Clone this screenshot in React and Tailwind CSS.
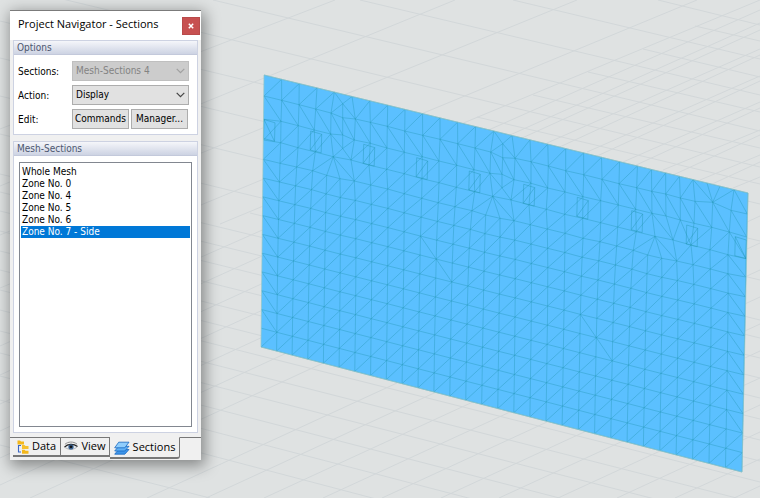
import { useState } from 'react';

const zones = ['Whole Mesh', 'Zone No. 0', 'Zone No. 4', 'Zone No. 5', 'Zone No. 6', 'Zone No. 7 - Side'];

// Ground grid, each entry is x1 y1 x2 y2
const groundLines = [
  [658, 0, 760, 25], [513, 0, 760, 59], [360, 0, 760, 95], [213, 0, 760, 131], [0, -16, 760, 167],
  [0, 21, 760, 204], [0, 58, 760, 241], [0, 96, 760, 280], [0, 134, 760, 320],
  [695, 26, 760, 41], [643, 49, 760, 77], [588, 72, 760, 112], [533, 95, 760, 148], [477, 117, 760, 184],
  [250, 213, 760, 338], [0, 174, 760, 358], [0, 192, 760, 378], [0, 211, 760, 398], [0, 231, 760, 419],
  [0, 251, 760, 440], [0, 270, 760, 461], [0, 290, 760, 482], [0, 310, 760, 504], [0, 331, 760, 526],
  [0, 353, 760, 550], [0, 376, 760, 574], [0, 400, 760, 600], [0, 445, 210, 498],
  [0, 129, 335, 0], [0, 186, 455, 0], [0, 235, 577, 0], [0, 288, 697, 0], [220, 224, 760, 0],
  [510, 135, 760, 23], [547, 143, 760, 49], [587, 152, 760, 76], [623, 162, 760, 102], [663, 170, 760, 130],
  [700, 180, 760, 155], [733, 188, 760, 177],
  [0, 346, 760, 10], [0, 375, 760, 30], [0, 404, 760, 55], [0, 431, 760, 81], [0, 458, 760, 108],
  [0, 485, 760, 135], [30, 498, 760, 162], [147, 498, 760, 216], [206, 498, 760, 243],
  [264, 498, 760, 270], [323, 498, 760, 297], [382, 498, 760, 324], [441, 498, 760, 351],
  [499, 498, 760, 378], [558, 498, 760, 405], [617, 498, 760, 432], [675, 498, 760, 459], [734, 498, 760, 486],
];

const topX = [
  264, 281.6, 299.2, 317, 334.3, 352, 369.8, 387.7, 405, 422.5, 440, 457.6, 475.5, 493.8, 512, 530, 547.8,
  565.7, 583.6, 601.5, 619.5, 637.4, 651.5, 665.7, 679.5, 693, 707, 720, 734, 748,
];

// Upper mesh rows, where the nodes bend around the openings
const row0 = topX.map((x) => [x, 75 + (x - 264) * 0.2438]);
const row1 = [
  [264, 96], [281.7, 100.3], [299, 104.7], [315.7, 109], [331, 113], [342.7, 117.7], [355.3, 119], [370.3, 122.3],
  [387.3, 126.3], [404.7, 131], [422.7, 135.3], [440, 139.3], [457.7, 143.7], [475, 148], [490.7, 152],
  [502.7, 157.7], [515, 158.3], [531, 161.7], [548.3, 166], [565.7, 170.7], [583.7, 174.7], [602, 179.3],
  [619, 183.7], [636.7, 187.7], [651.7, 191.3], [665.7, 194], [680.3, 198], [695, 201.3], [712.7, 202.3],
  [731, 210.3], [747.3, 214],
];
const row2 = [
  [264, 119.3], [281, 121.3], [298.3, 125.7], [314.3, 130], [330.7, 134], [342.7, 135], [354.3, 140], [370.3, 143.3],
  [387, 148], [404.3, 152.3], [422.3, 156.7], [439, 161], [456.7, 165.3], [474, 169.7], [490, 173.3],
  [502, 174.3], [514, 179.7], [531, 183.3], [547.7, 188], [565, 192], [583, 196.7], [600.7, 200.7],
  [618.3, 205], [635.7, 209.3], [652, 213.3], [666, 216], [680.3, 220], [694, 223.3], [711.7, 227.3],
  [729.3, 232], [746.7, 237],
];
const row3 = [
  [263.5, 140], [280.7, 142.7], [298, 147.7], [315.3, 152], [333.3, 156.7], [351, 160], [369, 165], [386.7, 169.3],
  [404.3, 173.7], [422, 178.7], [439, 182.7], [456.3, 187.3], [474.7, 191.7], [492.7, 196.3], [511, 200],
  [529, 204.7], [546.3, 209.3], [564.7, 214.3], [582.7, 218.3], [600.7, 222.7], [617.7, 227], [636.3, 231.7],
  [655, 236.3], [673, 240], [691, 245], [710, 249.7], [728, 254.7], [746, 258.7],
];
const row4 = [
  [263.3, 159.3], [280, 163.3], [296.7, 167], [312.7, 170.7], [326.7, 175.3], [340, 178.7], [354.3, 181],
  [370.7, 185], [387.7, 189], [404.3, 193.7], [421.7, 198.3], [438.3, 202.7], [455, 206.7], [472, 210.7],
  [485.7, 215], [500, 218.3], [514, 220.7], [530.3, 224.7], [547.3, 229], [565, 233.3], [583, 238.3],
  [600, 241.7], [616.7, 246], [633.3, 250.3], [647.7, 255], [661.7, 258.3], [676.7, 261], [693, 264.7],
  [710.3, 269], [728, 273.7], [745.7, 277],
];

// Below row 4 the mesh settles into 10 even rows of 30 columns
const lowerRow = (k) =>
  row4.map(([x, y], i) => {
    const u = i / 30;
    const t = k / 10;
    const startX = 263.3 + 467 * u + 15.4 * u * u;
    const startY = 159.3 + (startX - 263.3) * 0.2455;
    const endX = 261 + 466 * u + 15 * u * u;
    const endY = 347 + (endX - 261) * 0.2599;
    const fade = Math.pow(0.7, k) * (1 - t);
    return [startX + (endX - startX) * t + (x - startX) * fade, startY + (endY - startY) * t + (y - startY) * fade];
  });

const rows = [row0, row1, row2, row3, row4];
for (let k = 1; k <= 10; k++) rows.push(lowerRow(k));

// How each strip is cut into triangles: T steps along the upper row, B along the lower.
// H and h put an extra node in the middle of the cell.
const strips = [
  'TB'.repeat(4) + 'HT' + 'BT'.repeat(7) + 'BHT' + 'BT'.repeat(10) + 'BBTTTBBT',
  'BT'.repeat(30),
  'TB'.repeat(4) + 'hT' + 'BT'.repeat(7) + 'BhT' + 'BT'.repeat(7) + 'BBTTBTTBTBBT',
  'TB'.repeat(3) + 'TBBBTT' + 'BT'.repeat(7) + 'BBBTT' + 'BT'.repeat(7) + 'BBBTT' + 'BTBTBBT',
];
const flipped = { 6: 10, 7: 11, 8: 20, 9: 21 };
for (let r = 4; r < 14; r++) {
  let s = r === 13 ? 'TB' : 'BT';
  for (let c = 1; c < 29; c++) s += flipped[r] === c ? 'BT' : 'TB';
  strips.push(s + (r >= 12 ? 'TB' : 'BT'));
}

const seg = (a, b) => `M${a[0].toFixed(1)} ${a[1].toFixed(1)}L${b[0].toFixed(1)} ${b[1].toFixed(1)}`;

const buildMesh = () => {
  let d = '';
  rows.forEach((row) => {
    for (let i = 1; i < row.length; i++) d += seg(row[i - 1], row[i]);
  });
  strips.forEach((steps, r) => {
    const top = rows[r];
    const bottom = rows[r + 1];
    let i = 0;
    let j = 0;
    for (const step of steps) {
      if (step === 'H') {
        const hub = [bottom[j + 1][0], bottom[j + 1][1] - 14];
        [top[i], top[i + 1], bottom[j], bottom[j + 1], bottom[j + 2]].forEach((p) => { d += seg(hub, p); });
        i += 1;
        j += 2;
      } else if (step === 'h') {
        const hub = [top[i + 1][0], top[i + 1][1] + 13.5];
        [top[i], top[i + 1], top[i + 2], bottom[j], bottom[j + 1]].forEach((p) => { d += seg(hub, p); });
        i += 2;
        j += 1;
      } else if (step === 'T') {
        i += 1;
      } else {
        j += 1;
      }
      if (top[i] && bottom[j]) d += seg(top[i], bottom[j]);
    }
  });
  return d;
};

const meshPath = buildMesh();

const openings = [
  [264, 119.5], [310.7, 131], [363.7, 144.3], [416.7, 157.7], [469.3, 171], [523.7, 184.3], [577.3, 197.3],
  [631.7, 210.7], [686.7, 225], [735.3, 236.7],
];

const Viewport = () => (
  <svg className="absolute inset-0 h-full w-full" viewBox="0 0 760 498" preserveAspectRatio="xMinYMin slice" aria-hidden="true">
    <g stroke="#d2d7d9" strokeWidth="1">
      {groundLines.map(([x1, y1, x2, y2], i) => (
        <line key={i} x1={x1} y1={y1} x2={x2} y2={y2} />
      ))}
    </g>
    <polygon points="264,75 748,193 742,472 261,347" fill="#5bc0ff" />
    <path d={meshPath} stroke="#1f94b0" strokeOpacity="0.36" strokeWidth="1" fill="none" />
    <g stroke="#1f94b0" strokeOpacity="0.5" strokeWidth="0.8" fill="none">
      {openings.map(([x, y], i) => {
        const edge = i === 0 || i === openings.length - 1;
        return (
          <path
            key={i}
            d={`M${x} ${y}l11 3.3l-.5 18.5l-11 -2.8z${edge ? 'l10.5 21.8' : 'm11 3.3l-11.5 15.7'}`}
          />
        );
      })}
    </g>
    <path d="M264 75L748 193L742 472L261 347z" stroke="#8fc6c9" strokeWidth="0.7" fill="none" />
  </svg>
);

const Chevron = ({ className }) => (
  <svg className={className} width="9" height="6" viewBox="0 0 9 6" fill="none" stroke="currentColor" strokeWidth="1.2" aria-hidden="true">
    <path d="M.7 .8L4.5 4.6L8.3 .8" />
  </svg>
);

const DataIcon = () => (
  <svg width="12" height="14" viewBox="0 0 12 14" aria-hidden="true">
    <path d="M4 5.500H1.500V12H4" stroke="#3b66c4" fill="none" strokeWidth="1.1" />
    <path d="M.5 .5h2.500l1 1h3V4.500H.5z" fill="#f3b71b" />
    <path d="M5 5h2.500l1 1h3V9H5z" fill="#f6c02d" />
    <path d="M5 9.800h2.500l1 1h3v3H5z" fill="#f3b71b" />
  </svg>
);

const EyeIcon = () => (
  <svg width="14" height="11" viewBox="0 0 15 11" aria-hidden="true">
    <path d="M1 3.200C4 .2 10 -.3 14 3" stroke="#888" strokeWidth="1" fill="none" />
    <path d="M.5 6.200C4 2.500 10 2.200 14.500 5.500C11 9.200 5.500 9.800 .5 6.200z" fill="#e4eaf0" />
    <path d="M.5 6.200C4 2.500 10 2.200 14.500 5.500" stroke="#222" strokeWidth="1.3" fill="none" />
    <path d="M.5 6.200C5.500 9.800 11 9.200 14.500 5.500" stroke="#999" strokeWidth="0.7" fill="none" />
    <circle cx="7.500" cy="6" r="2.800" fill="#3b6496" />
    <circle cx="7.500" cy="5.800" r="1.500" fill="#111" />
  </svg>
);

const SectionsIcon = () => (
  <svg width="16" height="14" viewBox="0 0 16 14" stroke="#1767c0" strokeWidth="0.8" strokeLinejoin="round" aria-hidden="true">
    <path d="M.7 13.200L4.700 8.500H15L10.800 13.200z" fill="#3d95ea" />
    <path d="M.7 10L4.700 5.300H15L10.800 10z" fill="#5fb0f5" />
    <path d="M.7 6.800L4.700 1.200H15L10.800 6.800z" fill="#8fcdfc" />
  </svg>
);

const Group = ({ title, className = '', children }) => (
  <section className={`border border-[#cdd2e2] bg-white ${className}`}>
    <h2 className="h-[14px] border-b border-[#c3c9db] bg-gradient-to-b from-[#f5f6fa] to-[#cdd3e3] pl-[3px] text-[10px] leading-[14px] text-[#4d5770]">
      {title}
    </h2>
    {children}
  </section>
);

const selectClass = 'h-5 w-full appearance-none rounded-none border px-[3px] text-[10px] leading-4 outline-none';
const buttonClass = 'h-5 w-[57px] border border-[#adadad] bg-[#e1e1e1] text-center text-[10px] leading-4 whitespace-nowrap';

const App = () => {
  const [selected, setSelected] = useState('Zone No. 7 - Side');
  const [action, setAction] = useState('Display');
  const [tab, setTab] = useState('Sections');

  return (
    <main className='relative min-h-screen overflow-hidden bg-[#dfe2e2] p-[10px] font-["DejaVu_Sans_Condensed","DejaVu_Sans",sans-serif] text-black'>
      <Viewport />
      <aside className="relative w-[191px] border-t border-[#7b7b7b] bg-[#f0f0f0] shadow-[2px_4px_14px_2px_rgba(0,0,0,0.4)]">
        <header className="flex h-[29px] items-center justify-between bg-white pr-px pl-2">
          <h1 className='pb-1 font-["Open_Sans",sans-serif] text-[11px] leading-4 whitespace-nowrap'>Project Navigator - Sections</h1>
          <button
            type="button"
            aria-label="Close"
            className="flex h-[18px] w-[18px] items-center justify-center border border-[#b94a4a] bg-[#c75050] text-white"
          >
            <svg width="6" height="6" viewBox="0 0 6 6" stroke="currentColor" strokeWidth="1.500" aria-hidden="true">
              <path d="M.8 .8L5.200 5.200M5.200 .8L.8 5.200" />
            </svg>
          </button>
        </header>

        <div className="px-[3px]">
          <Group title="Options">
            <div className="grid grid-cols-[54px_1fr] items-center gap-y-1 pt-[6px] pr-2 pb-[5px] pl-1 text-[10px]">
              <label htmlFor="sections">Sections:</label>
              <div className="relative flex">
                <select id="sections" disabled className={`${selectClass} border-[#bfbfbf] bg-[#cccccc] text-[#838383] opacity-100`}>
                  <option>Mesh-Sections 4</option>
                </select>
                <Chevron className="pointer-events-none absolute top-[7px] right-1 text-[#a0a0a0]" />
              </div>
              <label htmlFor="action">Action:</label>
              <div className="relative flex">
                <select
                  id="action"
                  value={action}
                  onChange={(e) => setAction(e.target.value)}
                  className={`${selectClass} border-[#adadad] bg-[#e1e1e1]`}
                >
                  <option>Display</option>
                </select>
                <Chevron className="pointer-events-none absolute top-[7px] right-1 text-[#444]" />
              </div>
              <span>Edit:</span>
              <div className="flex gap-[2px]">
                <button type="button" className={buttonClass}>Commands</button>
                <button type="button" className={buttonClass}>Manager...</button>
              </div>
            </div>
          </Group>

          <Group title="Mesh-Sections" className="mt-[6px]">
            <div className="px-[5px] pt-[6px] pb-[5px]">
              <ul className="h-[265px] border border-[#828790] bg-white px-px py-[3px]">
                {zones.map((zone) => (
                  <li key={zone}>
                    <button
                      type="button"
                      aria-pressed={zone === selected}
                      onClick={() => setSelected(zone)}
                      className={`block w-full pl-px text-left text-[10px] leading-[12px] ${zone === selected ? 'bg-[#0078d7] text-white' : ''}`}
                    >
                      {zone}
                    </button>
                  </li>
                ))}
              </ul>
            </div>
          </Group>
        </div>

        <nav className='mt-1 flex h-[23px] items-start font-["Open_Sans",sans-serif] text-[11px]'>
          <span className="h-px w-[3px] bg-[#777]" />
          {[
            ['Data', DataIcon, 'w-[48px]'],
            ['View', EyeIcon, 'w-[49px]'],
            ['Sections', SectionsIcon, 'w-[70px]'],
          ].map(([name, Icon, width]) => (
            <button
              key={name}
              type="button"
              onClick={() => setTab(name)}
              className={`flex items-center justify-center gap-[3px] border-r border-b-2 border-[#777] whitespace-nowrap ${width} ${
                tab === name ? 'h-[22px] rounded-br-[3px] border-t border-t-[#f0f0f0]' : 'h-[20px] border-t'
              }`}
            >
              <Icon />
              {name}
            </button>
          ))}
          <span className="h-px flex-1 bg-[#777]" />
        </nav>
      </aside>
    </main>
  );
};

export default App;
